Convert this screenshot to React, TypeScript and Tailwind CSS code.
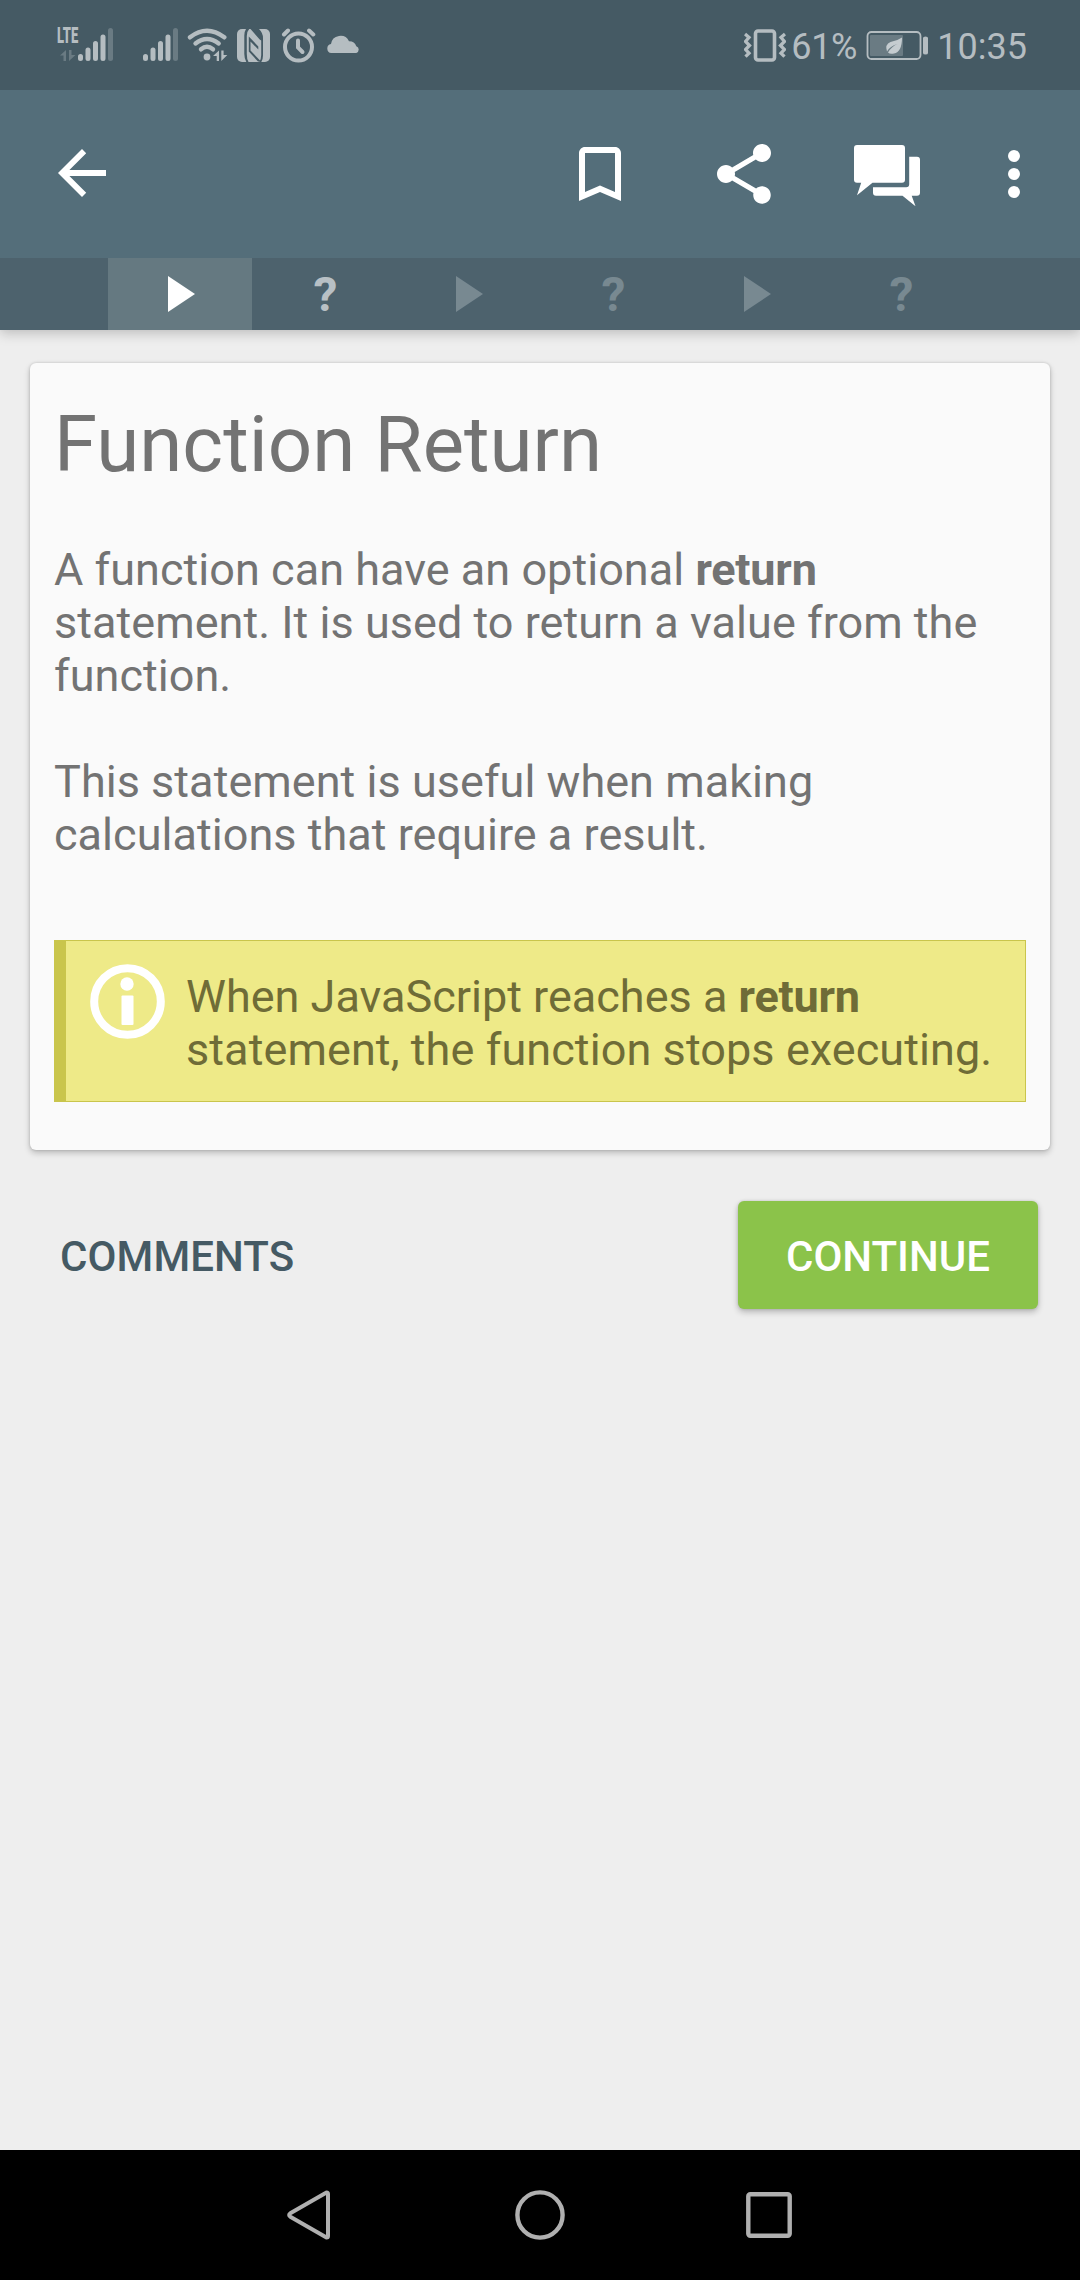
import React from "react";

const TINT = "#b5bdc1";
const DIM = "#6a7b83";

type GlyphProps = { box: string; className: string; children: React.ReactNode };

function Glyph({ box, className, children }: GlyphProps) {
  return (
    <svg viewBox={box} className={`block shrink-0 ${className}`} aria-hidden="true">
      {children}
    </svg>
  );
}

function SignalBars() {
  return (
    <g stroke={TINT} strokeWidth={5} strokeLinecap="round">
      <path d="M2.500 28.500v2M10 22v8.500M17.500 15.500v15M25 9v21.500" />
      <path d="M32.500 2.500v28" stroke={DIM} strokeWidth={5} />
    </g>
  );
}

function StatusBar() {
  return (
    <header className="flex h-[90px] shrink-0 items-start bg-[#455a64] pl-[57px] pr-[53px] text-[#b5bdc1]">
      <div className="mt-[24px] w-[21px]">
        <div className="h-[23px] w-[36px] origin-left scale-x-[0.59] whitespace-nowrap text-[22px] font-black leading-[23px]">LTE</div>
        <Glyph box="0 22 21 12" className="mt-[3px] h-[12px] w-[21px]">
          <path d="M3 27.500l6-5.500v11h-2.500v-5.500zM12 22v11l6.500-6h-4v-5z" fill={DIM} />
        </Glyph>
      </div>
      <Glyph box="0 0 35 33" className="mt-7 h-[33px] w-[35px]">
        <SignalBars />
      </Glyph>
      <Glyph box="0 0 35 33" className="ml-[30px] mt-7 h-[33px] w-[35px]">
        <SignalBars />
      </Glyph>
      <Glyph box="187 28 41 34" className="ml-[9px] mt-7 h-[34px] w-[41px]">
        <g fill="none" stroke={TINT} strokeWidth={4.400} strokeLinecap="round">
          <path d="M190 37.300Q207 24.300 224.300 37.300" />
          <path d="M195.500 43.500Q207 34.500 218.700 43.500" />
          <path d="M201 49.300Q207 44.300 213 49.300" />
        </g>
        <circle cx="207" cy="57" r="3.400" fill={TINT} />
        <path d="M213 56l6-5.500v10.500h-2.300v-5zM221.300 50.500v10.500l6-6h-3.700v-4.500z" fill={TINT} />
      </Glyph>
      <Glyph box="0 0 33 33" className="ml-[9px] mt-[29px] h-[33px] w-[33px]">
        <rect width="33" height="33" rx="5" fill={TINT} />
        <g fill="#455a64">
          <path d="M9 0h3.200Q9.800 2.500 9.800 7v18Q9.800 30 11.500 33H9.300Q7.300 29.500 7.300 25V6.500Q7.300 2.500 9 0z" />
          <path d="M13.500 0H22Q26 4 26 9v17.500Q26 30.500 24.300 33h-2Q24.200 30 24.200 26V11.500L22.700 10.500z" />
          <path d="M11.800 7.500L21.300 17.500V20.500L13.500 12.500V21.500L24 32.500H21L11.800 22.500z" />
        </g>
      </Glyph>
      <Glyph box="281 28 35 35" className="ml-[11px] mt-7 h-[35px] w-[35px]">
        <g fill="none" stroke={TINT} strokeWidth={4} strokeLinecap="round">
          <circle cx="298.500" cy="47" r="13.500" />
          <path d="M298 40.500v7l4.500 4.500" />
          <path d="M284 34.500l4-4M309 30.500l4.300 4" />
        </g>
      </Glyph>
      <Glyph box="0 0 33 18" className="ml-[11px] mt-[35px] h-[18px] w-[33px]">
        <path d="M4.300 18a4.500 4.500 0 0 1-.3-8.900A9.500 9.500 0 0 1 22 6.200a7.500 7.500 0 0 1 7.300 5A3.600 3.600 0 0 1 29.300 18z" fill={TINT} />
      </Glyph>

      <Glyph box="742 28 42 35" className="ml-auto mt-7 h-[35px] w-[42px]">
        <rect x="753.500" y="31" width="19" height="29" rx="2.500" fill="none" stroke={TINT} strokeWidth={3.600} />
        <path d="M743 34l4 3.500-3.500 4 4 4-4 4 3.500 3.700-3.500 3.500M783 34l-4 3.500 3.500 4-4 4 4 4-3.500 3.700 3.500 3.500" fill="none" stroke={TINT} strokeWidth={3.300} />
      </Glyph>
      <span className="ml-[5px] mt-[26px] w-[67px] whitespace-nowrap text-[36px] leading-[42px] tracking-[-0.4px]">61%</span>
      <Glyph box="865 30 62 31" className="ml-[8px] mt-[30px] mr-[9px] h-[31px] w-[62px]">
        <rect x="866.500" y="32" width="53" height="27" rx="4" fill="none" stroke={TINT} strokeWidth={1.800} />
        <rect x="869" y="35" width="33" height="21" rx="1" fill={DIM} />
        <path d="M901 37.500Q901 52 893 53.500Q889 54.500 887 52.500Q891 46 896.500 44Q889 46 886 51.500Q883.500 44.500 889.500 42Q896 41 901 37.500z" fill="#c5ccd0" />
        <path d="M922 38q0-1.500 2.500-1.500t2.500 1.500v15q0 1.500-2.500 1.500t-2.500-1.500z" fill={TINT} />
      </Glyph>
      <span className="mt-[26px] whitespace-nowrap text-[36px] leading-[42px]">10:35</span>
    </header>
  );
}

function AppBar() {
  return (
    <nav className="relative z-20 flex h-[168px] shrink-0 items-start bg-[#546e7a] pl-[46px] text-white">
      <button aria-label="Back" className="mt-[47px]">
        <Glyph box="0 0 24 24" className="h-[72px] w-[72px]">
          <path d="M20 11H7.800l5.600-5.600L12 4l-8 8 8 8 1.400-1.400L7.800 13H20z" fill="currentColor" />
        </Glyph>
      </button>
      <button aria-label="Bookmark" className="ml-auto mt-12">
        <Glyph box="0 0 24 24" className="h-[72px] w-[72px]">
          <path d="M17 3H7c-1.100 0-2 .9-2 2v16l7-3 7 3V5c0-1.100-.9-2-2-2zm0 15l-5-2.180L7 18V5h10v13z" fill="currentColor" />
        </Glyph>
      </button>
      <button aria-label="Share" className="ml-[72px] mt-12">
        <Glyph box="0 0 24 24" className="h-[72px] w-[72px]">
          <path d="M18 16.080c-.76 0-1.440.3-1.960.77L8.910 12.700c.05-.23.09-.46.09-.7s-.04-.47-.09-.7l7.050-4.110c.54.5 1.250.81 2.040.81 1.660 0 3-1.340 3-3s-1.340-3-3-3-3 1.340-3 3c0 .24.04.47.09.7L8.040 9.810C7.500 9.310 6.790 9 6 9c-1.660 0-3 1.340-3 3s1.340 3 3 3c.79 0 1.500-.31 2.040-.81l7.120 4.160c-.05.21-.08.43-.08.65 0 1.610 1.310 2.920 2.920 2.920s2.920-1.310 2.920-2.920-1.310-2.920-2.920-2.920z" fill="currentColor" />
        </Glyph>
      </button>
      <button aria-label="Discussion" className="ml-[74px] mt-[55px]">
        <Glyph box="854 145 67 62" className="h-[62px] w-[67px]">
          <g fill="currentColor">
            <path d="M857 145h45q3 0 3 3v31.700q0 3-3 3h-29.500L857 195.300l4.200-12.600H857q-3 0-3-3V148q0-3 3-3z" />
            <path d="M909.200 156.700h7.800q3 0 3 3v33q0 3-3 3h-5.300l3.800 10.500-13-10.500H876q-3 0-3-3v-5.400h33.200q3 0 3-3z" />
          </g>
        </Glyph>
      </button>
      <button aria-label="More options" className="ml-[57px] mr-[30px] mt-12">
        <Glyph box="0 0 24 24" className="h-[72px] w-[72px]">
          <path d="M12 8a2 2 0 1 0 0-4 2 2 0 0 0 0 4zm0 2a2 2 0 1 0 0 4 2 2 0 0 0 0-4zm0 6a2 2 0 1 0 0 4 2 2 0 0 0 0-4z" fill="currentColor" />
        </Glyph>
      </button>
    </nav>
  );
}

const steps = [
  { kind: "lesson", tone: "bg-[#657981] text-white" },
  { kind: "quiz", tone: "text-[#b8c0c5]" },
  { kind: "lesson", tone: "text-[#788991]" },
  { kind: "quiz", tone: "text-[#788991]" },
  { kind: "lesson", tone: "text-[#788991]" },
  { kind: "quiz", tone: "text-[#788991]" },
];

function StepTabs() {
  return (
    <div className="relative z-10 flex h-[72px] shrink-0 justify-center bg-[#4d626d] shadow-[0_3px_12px_rgba(0,0,0,0.22)]">
      {steps.map((s, i) => (
        <div key={i} className={`flex w-[144px] items-center justify-center ${s.tone}`}>
          {s.kind === "lesson" ? (
            <Glyph box="0 0 27 36" className="ml-[3px] h-9 w-[27px]">
              <path d="M0 0l27 18L0 36z" fill="currentColor" />
            </Glyph>
          ) : (
            <span className="ml-[3px] mt-[2px] text-[48px] font-bold leading-[72px]">?</span>
          )}
        </div>
      ))}
    </div>
  );
}

export default function App() {
  return (
    <div className="flex h-[2280px] w-[1080px] flex-col overflow-hidden bg-[#eeeeee] font-['Roboto',sans-serif]">
      <StatusBar />
      <AppBar />
      <StepTabs />
      <main className="flex-1 px-[30px] pt-[33px]">
        <article className="h-[787px] rounded-[6px] bg-[#fafafa] px-6 pt-[36px] text-[45px] leading-[53px] text-[#737373] shadow-[0_3px_6px_rgba(0,0,0,0.22),0_0_3px_rgba(0,0,0,0.16)]">
          <h1 className="text-[78px] leading-[92px]">Function Return</h1>
          <p className="mt-[52px] tracking-[0.03px]">
            A function can have an optional <b className="tracking-[-0.2px]">return</b>
            <br />
            statement. It is used to return a value from the
            <br />
            function.
          </p>
          <p className="mt-[53px] tracking-[0.03px]">
            This statement is useful when making
            <br />
            calculations that require a result.
          </p>
          <aside className="mt-[79px] flex h-[162px] border border-l-[12px] border-[#c9c54c] bg-[#eeea88] text-[#6f6c37]">
            <Glyph box="0 0 75 75" className="ml-6 mt-[23px] h-[75px] w-[75px]">
              <circle cx="37.500" cy="37.500" r="33.300" fill="none" stroke="#fff" strokeWidth={8} />
              <circle cx="37" cy="20" r="6.700" fill="#fff" />
              <rect x="31.500" y="31.500" width="12" height="29.500" rx="1" fill="#fff" />
            </Glyph>
            <p className="ml-[21px] mt-[29px] whitespace-nowrap">
              When JavaScript reaches a <b className="tracking-[-0.2px]">return</b>
              <br />
              <span className="tracking-[0.08px]">statement, the function stops executing.</span>
            </p>
          </aside>
        </article>
        <div className="mt-[51px] flex items-center justify-between pl-[30px] pr-3 text-[42px] font-medium">
          <button className="pt-[2px] tracking-[0.1px] text-[#455a64]">COMMENTS</button>
          <button className="h-[108px] w-[300px] rounded-[6px] bg-[#8bc34a] pt-[2px] text-white shadow-[0_3px_6px_rgba(0,0,0,0.24),0_0_3px_rgba(0,0,0,0.12)]">
            CONTINUE
          </button>
        </div>
      </main>
      <footer className="flex h-[130px] shrink-0 items-start bg-black pl-[285px] pt-10">
        <Glyph box="285 2190 50 50" className="h-[50px] w-[50px]">
          <path d="M326.500 2192.500L290.300 2213.300Q288 2215 290.300 2216.700L326.500 2237.500Q328 2237.500 328 2236V2194Q328 2192.500 326.500 2192.500z" fill="none" stroke="#b0b0b0" strokeWidth={4} strokeLinejoin="round" />
        </Glyph>
        <Glyph box="0 0 50 50" className="ml-[180px] h-[50px] w-[50px]">
          <circle cx="25" cy="25" r="22.600" fill="none" stroke="#b0b0b0" strokeWidth={4.400} />
        </Glyph>
        <Glyph box="0 0 46 46" className="ml-[181px] mt-[2px] h-[46px] w-[46px]">
          <rect x="2.300" y="2.300" width="41.400" height="41.400" rx="2" fill="none" stroke="#b0b0b0" strokeWidth={4.400} />
        </Glyph>
      </footer>
    </div>
  );
}
